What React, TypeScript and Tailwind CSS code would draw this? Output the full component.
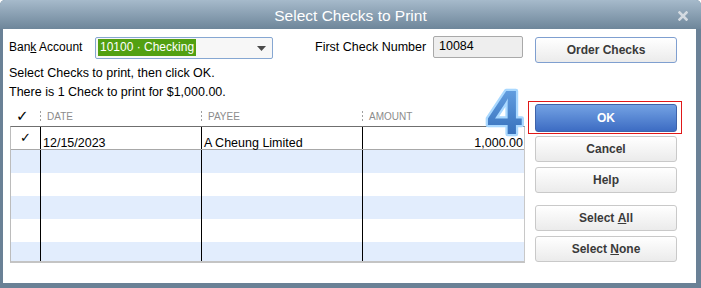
import React from "react";

const btnBase =
  "w-[142px] h-[26px] rounded-[3px] border text-[12px] font-bold text-[#3a3a3a] flex items-center justify-center bg-gradient-to-b from-[#ffffff] to-[#ebebeb]";

function Btn({ children, className = "" }: { children: React.ReactNode; className?: string }) {
  return <div className={`${btnBase} border-[#c9c9c9] ${className}`}>{children}</div>;
}

function HeaderSep() {
  return (
    <div className="flex flex-col gap-[2px] w-[1px] mr-[6px]">
      <div className="w-[1px] h-[2px] bg-[#a0a0a0]" />
      <div className="w-[1px] h-[2px] bg-[#a0a0a0]" />
      <div className="w-[1px] h-[2px] bg-[#a0a0a0]" />
    </div>
  );
}

export default function App() {
  const emptyRows = [
    { bg: "bg-[#e2edfd]", h: "h-[23px]" },
    { bg: "bg-white", h: "h-[23px]" },
    { bg: "bg-[#e2edfd]", h: "h-[23px]" },
    { bg: "bg-white", h: "h-[23px]" },
    { bg: "bg-[#e2edfd]", h: "h-[19px]" },
  ];
  return (
    <div className="w-[701px] h-[288px] bg-white overflow-hidden relative font-['Liberation_Sans',Arial,sans-serif]">
      <div className="w-full h-full rounded-t-[5px] bg-[#6a8196] flex flex-col overflow-hidden">
        {/* Title bar */}
        <div className="h-[29px] shrink-0 bg-gradient-to-b from-[#a6bacb] to-[#6e869a] relative flex items-center justify-center pt-[3px]">
          <span className="text-white text-[15.5px] leading-none">Select Checks to Print</span>
          <div className="absolute right-[13px] top-[11px]">
            <svg width="10" height="10" viewBox="0 0 10 10">
              <path d="M1.5 1.5 L8.5 8.5 M8.5 1.5 L1.5 8.5" stroke="#d3dae1" strokeWidth="2.6" strokeLinecap="square" />
            </svg>
          </div>
        </div>
        {/* Body */}
        <div className="flex-1 ml-[3px] mr-[5px] mb-[5px] bg-white flex text-[12px] text-black">
          {/* Left column */}
          <div className="w-[532px] pl-[6px] pt-[7px] flex flex-col">
            <div className="flex items-center h-[22px]">
              <div className="w-[86px]">
                Ban<span className="underline">k</span> Account
              </div>
              <div className="w-[178px] h-[22px] mt-[1px] rounded-[2px] border border-[#86a7d2] bg-[#f7f7f7] flex items-center pl-[2px] relative">
                <span className="bg-[#52a012] text-white h-[17px] leading-[17px] px-[2px] text-[12px]">10100 · Checking</span>
                <svg className="absolute right-[6px] top-[8px]" width="9" height="5" viewBox="0 0 9 5">
                  <path d="M0 0 H9 L4.5 5 Z" fill="#4a4a4a" />
                </svg>
              </div>
              <div className="ml-[42px] w-[118px] text-[12.5px]">First Check Number</div>
              <div className="w-[90px] h-[22px] -mt-[1px] rounded-[2px] border border-[#a9a9a9] bg-[#eeeeee] flex items-center pl-[5px] text-[12.5px]">
                10084
              </div>
            </div>
            <div className="mt-[6px] leading-[19px] text-[12.5px]">Select Checks to print, then click OK.</div>
            <div className="leading-[19px] text-[12.5px]">There is 1 Check to print for $1,000.00.</div>
            {/* Header */}
            <div className="mt-[4px] ml-[2px] h-[20px] grid grid-cols-[30px_161px_161px_161px] items-center text-[10px] text-[#8c8c8c]">
              <div className="pl-[5px] text-black text-[15px] font-bold font-['DejaVu_Sans',sans-serif] leading-none">✓</div>
              <div className="flex items-center -ml-[1px]">
                <HeaderSep />
                <span>DATE</span>
              </div>
              <div className="flex items-center -ml-[1px]">
                <HeaderSep />
                <span>PAYEE</span>
              </div>
              <div className="flex items-center -ml-[1px]">
                <HeaderSep />
                <span>AMOUNT</span>
              </div>
            </div>
            {/* Table */}
            <div className="ml-[1px] w-[515px] h-[137px] border-l border-r border-t border-b-2 border-l-[#bcbcbc] border-r-[#c8c8c8] border-b-[#c4c4c4] border-t-[#6f6f6f] overflow-hidden">
              <div className="grid grid-cols-[30px_161px_161px_161px] h-[23px] border-b border-[#a8a8a8] bg-white">
                <div className="border-r border-black flex items-start justify-center pt-[4px] text-[13px] font-['DejaVu_Sans',sans-serif] leading-none">✓</div>
                <div className="border-r border-black flex items-end pl-[2px] leading-[12px] text-[12.5px]">12/15/2023</div>
                <div className="border-r border-black flex items-end pl-[2px] leading-[12px] text-[12.5px]">A Cheung Limited</div>
                <div className="flex items-end justify-end pr-[1px] leading-[12px] text-[12.5px]">1,000.00</div>
              </div>
              {emptyRows.map((r, i) => (
                <div key={i} className={`grid grid-cols-[30px_161px_161px_161px] ${r.h} ${r.bg}`}>
                  <div className="border-r border-black" />
                  <div className="border-r border-black" />
                  <div className="border-r border-black" />
                  <div />
                </div>
              ))}
            </div>
          </div>
          {/* Right column */}
          <div className="w-[142px] pt-[8px] flex flex-col">
            <div className={`${btnBase} border-[#7f9fd0]`}>Order Checks</div>
            <div className="relative mt-[41px]">
              <div className="absolute -left-[7px] -right-[5px] -top-[3px] -bottom-[2px] border border-[#e01818]" />
              <div className="relative w-[142px] h-[28px] rounded-[3px] border border-[#3e63aa] bg-gradient-to-b from-[#74a2e3] to-[#3d6cc3] text-white text-[12px] font-bold flex items-center justify-center">
                OK
              </div>
            </div>
            <Btn className="mt-[4px]">Cancel</Btn>
            <Btn className="mt-[5px]">Help</Btn>
            <Btn className="mt-[12px]">
              Select&nbsp;<span className="underline">A</span>ll
            </Btn>
            <Btn className="mt-[5px]">
              Select&nbsp;<span className="underline">N</span>one
            </Btn>
          </div>
        </div>
      </div>
      {/* Step annotation "4" */}
      <svg className="absolute left-[478px] top-[76px]" width="58" height="66" viewBox="0 0 58 66">
        <defs>
          <linearGradient id="g4" x1="0" y1="0" x2="0" y2="1">
            <stop offset="0" stopColor="#6eaaea" />
            <stop offset="1" stopColor="#2c65b2" />
          </linearGradient>
        </defs>
        <text
          x="9"
          y="58"
          fontFamily="Liberation Sans, Arial, sans-serif"
          fontWeight="bold"
          fontSize="63"
          fill="url(#g4)"
          stroke="#a9d8ff"
          strokeWidth="4.5"
          strokeLinejoin="round"
          paintOrder="stroke"
        >
          4
        </text>
      </svg>
    </div>
  );
}
